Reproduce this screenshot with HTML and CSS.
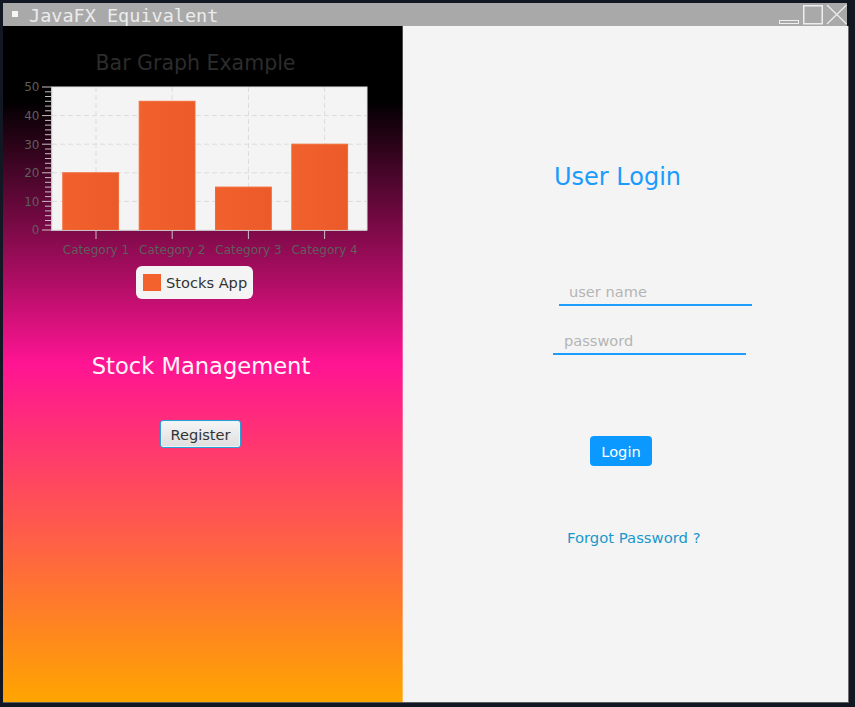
FILE: index.html
```html
<!DOCTYPE html>
<html lang="en">
<head>
<meta charset="utf-8">
<title>JavaFX Equivalent</title>
<link rel="stylesheet" href="styles.css">
</head>
<body>
<div class="window">
  <div class="titlebar">
    <span class="app-icon"></span>
    <span class="title">JavaFX Equivalent</span>
    <svg class="controls" width="70" height="23" viewBox="0 0 70 23">
      <rect x="2.5" y="17.5" width="19" height="3" fill="none" stroke="#eeeeee" stroke-width="1"/>
      <rect x="26.75" y="2.75" width="18.5" height="18" fill="none" stroke="#eeeeee" stroke-width="1.5"/>
      <path d="M50 2 L69.5 21 M69.5 2 L50 21" stroke="#eeeeee" stroke-width="1.2" fill="none"/>
    </svg>
  </div>
  <div class="content">
    <div class="left">
      <svg class="chart" width="399" height="232" viewBox="0 0 399 232">
        <defs>
          <linearGradient id="bar" x1="0" y1="0" x2="1" y2="0">
            <stop offset="0" stop-color="#f1612d"/>
            <stop offset="1" stop-color="#eb5a29"/>
          </linearGradient>
        </defs>
        <text class="chart-title" x="192.5" y="43.5" text-anchor="middle">Bar Graph Example</text>
        <rect x="49" y="61" width="315" height="143" fill="#f4f4f4" stroke="#e2e2e2" stroke-width="1"/>
        <g class="grid">
          <path d="M49 175.4H364 M49 146.8H364 M49 118.2H364 M49 89.6H364"/>
          <path d="M93 61V204 M169.2 61V204 M245.4 61V204 M321.6 61V204"/>
        </g>
        <g class="bars" fill="url(#bar)" stroke="#f36a36" stroke-width="1">
          <rect x="59.8" y="146.8" width="55.8" height="57.2"/>
          <rect x="136.2" y="75.3" width="55.8" height="128.7"/>
          <rect x="212.5" y="161.1" width="55.8" height="42.9"/>
          <rect x="288.8" y="118.2" width="55.8" height="85.8"/>
        </g>
        <g class="ticks">
          <path d="M48.5 61V204.5 M48 204.5H364"/>
          <path d="M39 204H49 M39 175.4H49 M39 146.8H49 M39 118.2H49 M39 89.6H49 M39 61H49"/>
          <path d="M42 199.2H49 M42 194.5H49 M42 189.7H49 M42 184.9H49 M42 180.2H49 M42 170.6H49 M42 165.9H49 M42 161.1H49 M42 156.3H49 M42 151.6H49 M42 142H49 M42 137.3H49 M42 132.5H49 M42 127.7H49 M42 123H49 M42 113.4H49 M42 108.7H49 M42 103.9H49 M42 99.1H49 M42 94.4H49 M42 84.8H49 M42 80.1H49 M42 75.3H49 M42 70.5H49 M42 65.8H49"/>
          <path d="M93 204V213 M169.2 204V213 M245.4 204V213 M321.6 204V213"/>
        </g>
        <g class="axis-label" text-anchor="end">
          <text x="36.5" y="208.4">0</text>
          <text x="36.5" y="179.8">10</text>
          <text x="36.5" y="151.2">20</text>
          <text x="36.5" y="122.6">30</text>
          <text x="36.5" y="94">40</text>
          <text x="36.5" y="65.4">50</text>
        </g>
        <g class="axis-label" text-anchor="middle">
          <text x="93" y="228">Category 1</text>
          <text x="169.2" y="228">Category 2</text>
          <text x="245.4" y="228">Category 3</text>
          <text x="321.6" y="228">Category 4</text>
        </g>
      </svg>
      <div class="legend"><span class="swatch"></span><span class="legend-text">Stocks App</span></div>
      <div class="heading">Stock Management</div>
      <button class="register">Register</button>
    </div>
    <div class="right">
      <div class="login-title">User Login</div>
      <div class="field field-user"><span class="placeholder">user name</span></div>
      <div class="field field-pass"><span class="placeholder">password</span></div>
      <button class="login">Login</button>
      <a class="forgot">Forgot Password ?</a>
    </div>
  </div>
</div>
</body>
</html>
```

FILE: styles.css
```css
html, body {
  margin: 0;
  padding: 0;
}

body {
  background: #111723;
  width: 855px;
  height: 707px;
  overflow: hidden;
  font-family: "DejaVu Sans", "Noto Sans", sans-serif;
}

.window {
  margin: 3px 0 0 3px;
  width: 846px;
}

.titlebar {
  height: 23px;
  width: 844px;
  background: #a9a9a9;
  display: flex;
  align-items: flex-start;
  box-sizing: border-box;
}

.app-icon {
  width: 6px;
  height: 6px;
  background: #f6f6f6;
  margin: 8px 0 0 9px;
  flex: none;
}

.title {
  font-family: "DejaVu Sans Mono", monospace;
  font-size: 18.5px;
  line-height: 23px;
  padding-top: 1px;
  color: #ececec;
  margin-left: 11px;
  white-space: nowrap;
}

.controls {
  margin-left: auto;
  flex: none;
  display: block;
}

.content {
  display: flex;
  height: 676px;
  border-right: 1px solid #6e6e6e;
  border-bottom: 1px solid #5e5e5e;
  width: 845px;
}

.left {
  width: 399px;
  flex: none;
  border-right: 1px solid rgba(255, 255, 255, 0.3);
  background: linear-gradient(to bottom, #000000 11%, #ff1493 50%, #ffa500 100%);
  display: flex;
  flex-direction: column;
  align-items: flex-start;
}

.chart {
  display: block;
  flex: none;
}

.chart-title {
  font-size: 20.5px;
  fill: #2c2c2c;
}

.grid path {
  stroke: #dcdcdc;
  stroke-width: 1;
  stroke-dasharray: 5 3;
  fill: none;
}

.ticks path {
  stroke: #c9c0c4;
  stroke-width: 1;
  fill: none;
}

.axis-label {
  font-size: 12px;
  fill: #5e5e5e;
}

.legend {
  margin: 8px 0 0 133px;
  display: flex;
  align-items: center;
  gap: 5px;
  padding: 0 6px 0 7px;
  height: 33px;
  box-sizing: border-box;
  background: #f4f4f4;
  border-radius: 6px;
}

.swatch {
  width: 18px;
  height: 17px;
  background: #f3622d;
  flex: none;
}

.legend-text {
  font-size: 14.6px;
  color: #333333;
  line-height: 20px;
}

.heading {
  margin-top: 54px;
  align-self: stretch;
  text-align: center;
  padding-right: 3px;
  font-size: 22.6px;
  line-height: 27px;
  color: #fff4fa;
}

.register {
  margin: 40px 0 0 157px;
  width: 81px;
  height: 28px;
  padding: 0;
  font-family: "DejaVu Sans", sans-serif;
  font-size: 14.6px;
  color: #333333;
  border: 1px solid #2aa0d8;
  border-radius: 3px;
  box-shadow: inset 0 0 0 1px #e9f5fb;
  background: linear-gradient(to bottom, #f6f6f6, #dedede);
  display: flex;
  align-items: center;
  justify-content: center;
}

.right {
  flex: 1;
  background: #f4f4f4;
  padding-top: 137px;
  display: flex;
  flex-direction: column;
  align-items: flex-start;
  box-sizing: border-box;
}

.login-title {
  margin-left: 151px;
  font-size: 24px;
  line-height: 28px;
  color: #1b9cfc;
}

.field {
  width: 193px;
  height: 25px;
  box-sizing: border-box;
  border-bottom: 2px solid #1e9dff;
  padding-top: 1px;
  font-size: 14.6px;
  line-height: 20px;
}

.field-user {
  margin: 90px 0 0 156px;
  padding-left: 10px;
}

.field-pass {
  margin: 24px 0 0 150px;
  padding-left: 11px;
}

.placeholder {
  color: #b4b4b4;
}

.login {
  margin: 81px 0 0 187px;
  width: 62px;
  height: 30px;
  padding: 0;
  border: none;
  border-radius: 4px;
  background: #0b99ff;
  color: #ffffff;
  font-family: "DejaVu Sans", sans-serif;
  font-size: 14.6px;
  display: flex;
  align-items: center;
  justify-content: center;
}

.forgot {
  margin: 62px 0 0 164px;
  font-size: 14.8px;
  line-height: 20px;
  color: #1a98cc;
}
```
